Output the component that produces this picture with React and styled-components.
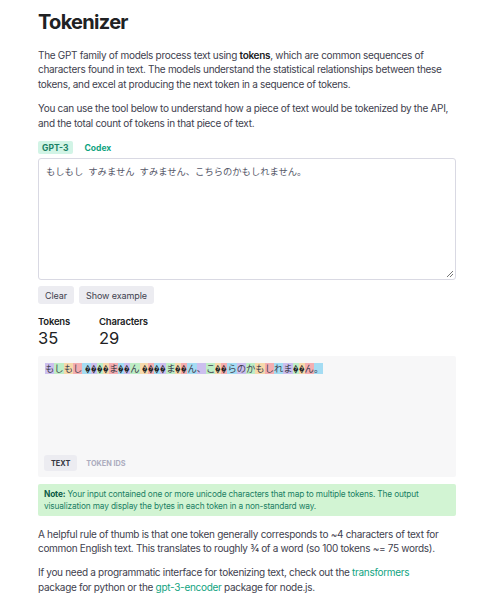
import React from "react";
import styled, { createGlobalStyle } from "styled-components";

const Global = createGlobalStyle`
  html, body { margin: 0; padding: 0; background: #fff; }
  body { font-family: Inter, "Noto Sans CJK JP", sans-serif; color: #353740; }
`;

const Page = styled.div`
  width: 418px;
  padding: 9px 0 20px 38px;
`;

const Title = styled.h1`
  margin: 0 0 12.7px;
  font-size: 20px;
  font-weight: 700;
  letter-spacing: -0.7px;
  color: #202123;
  line-height: 26px;
`;

const Para = styled.p`
  margin: 0 0 9.5px;
  max-width: 412px;
  font-size: 10px;
  letter-spacing: -0.3px;
  line-height: 14.6px;
  color: #41414e;
  b { font-weight: 600; color: #202123; }
`;

const Link = styled.a`
  color: #10a37f;
  text-decoration: none;
`;

const ModelTabs = styled.div`
  display: flex;
  gap: 8px;
  margin-top: 11px;
  margin-bottom: 4px;
`;

const ModelTab = styled.span`
  font-size: 8.5px;
  font-weight: 700;
  padding: 1.5px 4px;
  border-radius: 2px;
  line-height: 10px;
  color: ${p => (p.$active ? "#1a7f64" : "#10a37f")};
  background: ${p => (p.$active ? "#d2f4e6" : "transparent")};
`;

const TextBox = styled.div`
  height: 122px;
  border: 1px solid #d9d9e3;
  border-radius: 3px;
  box-sizing: border-box;
  padding: 6px 7px;
  font-size: 9.3px;
  word-spacing: 2.5px;
  line-height: 14px;
  color: #565869;
  position: relative;
`;

const Grip = styled.svg`
  position: absolute;
  right: 1px;
  bottom: 1px;
`;

const Buttons = styled.div`
  display: flex;
  gap: 5px;
  margin-top: 6px;
`;

const Button = styled.span`
  background: #ececf1;
  border-radius: 3px;
  font-size: 9px;
  letter-spacing: -0.1px;
  color: #41414e;
  padding: 0 7px;
  height: 18px;
  display: flex;
  align-items: center;
`;

const Stats = styled.div`
  display: flex;
  gap: 29px;
  margin-top: 12px;
`;

const Stat = styled.div`
  display: flex;
  flex-direction: column;
`;

const StatLabel = styled.span`
  font-size: 9.5px;
  font-weight: 600;
  letter-spacing: -0.2px;
  color: #202123;
  line-height: 12px;
`;

const StatValue = styled.span`
  font-size: 16.5px;
  line-height: 20px;
  color: #202123;
`;

const Output = styled.div`
  margin-top: 8px;
  height: 121px;
  background: #f7f7f8;
  border-radius: 2px;
  padding: 6px 6px 6px 7px;
  box-sizing: border-box;
  display: flex;
  flex-direction: column;
  justify-content: space-between;
`;

const Tokens = styled.div`
  font-size: 9.3px;
  line-height: 13px;
  color: #41414e;
`;

const Tok = styled.span`
  background: ${p => p.$bg};
`;

const Bad = styled.span`
  display: inline-block;
  font-family: "Liberation Sans", sans-serif;
  font-size: 9.5px;
  color: #202123;
  transform: scaleX(0.58);
  transform-origin: left center;
  margin-right: -4px;
`;

const ViewTabs = styled.div`
  display: flex;
  gap: 2px;
  margin-left: -1px;
`;

const ViewTab = styled.span`
  font-size: 7.3px;
  font-weight: 700;
  padding: 0 7px;
  height: 16px;
  display: flex;
  align-items: center;
  border-radius: 3px;
  color: ${p => (p.$active ? "#353740" : "#acacbe")};
  background: ${p => (p.$active ? "#ececf1" : "transparent")};
`;

const Note = styled.div`
  margin-top: 7px;
  margin-bottom: 10.5px;
  background: #d2f4d3;
  border-radius: 2px;
  padding: 4px 6px 4px;
  font-size: 8.3px;
  letter-spacing: -0.15px;
  line-height: 12px;
  color: #1a7f64;
  b { color: #0b5a46; font-weight: 700; }
`;

const COLORS = [
  "rgba(107,64,216,.3)",
  "rgba(104,222,122,.4)",
  "rgba(244,172,54,.4)",
  "rgba(239,65,70,.4)",
  "rgba(39,181,234,.4)",
];

const D = "\uFFFD";
const TOKENS = [
  "も", "し", "も", "し", " " + D, D, D, D, "ま", D, D, "ん",
  " " + D, D, D, D, "ま", D, D, "ん", "、", "こ", D, D, "ら",
  "の", "か", "も", "し", "れ", "ま", D, D, "ん", "。",
];

function renderToken(t) {
  return t.split("").map((c, j) =>
    c === D ? <Bad key={j}>{c}</Bad> : <React.Fragment key={j}>{c}</React.Fragment>
  );
}

export default function App() {
  return (
    <>
      <Global />
      <Page>
        <Title>Tokenizer</Title>
        <Para>
          The GPT family of models process text using <b>tokens</b>, which are common sequences of
          characters found in text. The models understand the statistical relationships between these
          tokens, and excel at producing the next token in a sequence of tokens.
        </Para>
        <Para>
          You can use the tool below to understand how a piece of text would be tokenized by the API,
          and the total count of tokens in that piece of text.
        </Para>
        <ModelTabs>
          <ModelTab $active>GPT-3</ModelTab>
          <ModelTab>Codex</ModelTab>
        </ModelTabs>
        <TextBox>
          もしもし すみません すみません、こちらのかもしれません。
          <Grip width="8" height="8" viewBox="0 0 8 8">
            <path d="M7 1 L1 7 M7 4 L4 7" stroke="#777" strokeWidth="1" />
          </Grip>
        </TextBox>
        <Buttons>
          <Button>Clear</Button>
          <Button>Show example</Button>
        </Buttons>
        <Stats>
          <Stat>
            <StatLabel>Tokens</StatLabel>
            <StatValue>35</StatValue>
          </Stat>
          <Stat>
            <StatLabel>Characters</StatLabel>
            <StatValue>29</StatValue>
          </Stat>
        </Stats>
        <Output>
          <Tokens>
            {TOKENS.map((t, i) => (
              <Tok key={i} $bg={COLORS[i % 5]}>{renderToken(t)}</Tok>
            ))}
          </Tokens>
          <ViewTabs>
            <ViewTab $active>TEXT</ViewTab>
            <ViewTab>TOKEN IDS</ViewTab>
          </ViewTabs>
        </Output>
        <Note>
          <b>Note:</b> Your input contained one or more unicode characters that map to multiple tokens. The output
          visualization may display the bytes in each token in a non-standard way.
        </Note>
        <Para>
          A helpful rule of thumb is that one token generally corresponds to ~4 characters of text for
          common English text. This translates to roughly ¾ of a word (so 100 tokens ~= 75 words).
        </Para>
        <Para>
          If you need a programmatic interface for tokenizing text, check out the{" "}
          <Link>transformers</Link> package for python or the <Link>gpt-3-encoder</Link> package for node.js.
        </Para>
      </Page>
    </>
  );
}
